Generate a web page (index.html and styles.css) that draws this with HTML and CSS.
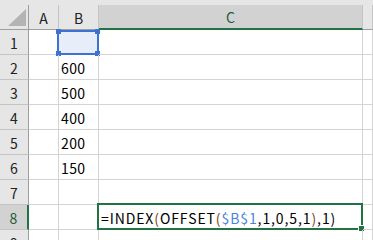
FILE: index.html
```html
<!DOCTYPE html>
<html lang="ja">
<head>
    <meta charset="UTF-8">
    <title>INDEX OFFSET</title>
    <link rel="stylesheet" href="styles.css">
</head>
<body>
    <div class="topbar"></div>
    <div class="grid">
        <!-- заголовки столбцов -->
        <div class="hd corner">
            <svg width="28" height="24" viewBox="0 0 28 24"><polygon points="8,21 26,21 26,4" fill="#b4b4b4"/></svg>
        </div>
        <div class="hd col">A</div>
        <div class="hd col">B</div>
        <div class="hd col active">C</div>
        <div class="hd col"></div>

        <div class="hd row">1</div>
        <div class="cell"></div>
        <div class="cell ref">
            <div class="ref-box">
                <i class="h tl"></i><i class="h tr"></i><i class="h bl"></i><i class="h br"></i>
            </div>
        </div>
        <div class="cell"></div>
        <div class="cell"></div>

        <div class="hd row">2</div>
        <div class="cell"></div>
        <div class="cell num">600</div>
        <div class="cell"></div>
        <div class="cell"></div>

        <div class="hd row">3</div>
        <div class="cell"></div>
        <div class="cell num">500</div>
        <div class="cell"></div>
        <div class="cell"></div>

        <div class="hd row">4</div>
        <div class="cell"></div>
        <div class="cell num">400</div>
        <div class="cell"></div>
        <div class="cell"></div>

        <div class="hd row">5</div>
        <div class="cell"></div>
        <div class="cell num">200</div>
        <div class="cell"></div>
        <div class="cell"></div>

        <div class="hd row">6</div>
        <div class="cell"></div>
        <div class="cell num">150</div>
        <div class="cell"></div>
        <div class="cell"></div>

        <div class="hd row">7</div>
        <div class="cell"></div>
        <div class="cell"></div>
        <div class="cell"></div>
        <div class="cell"></div>

        <div class="hd row active">8</div>
        <div class="cell"></div>
        <div class="cell"></div>
        <div class="cell edit">=INDEX<span class="p2">(</span>OFFSET<span class="p2">(</span><span class="refc">$B$1</span>,1,0,5,1<span class="p2">)</span>,1)<div class="sel-box"><i class="fill"></i></div></div>
        <div class="cell"></div>

        <div class="hd row">9</div>
        <div class="cell"></div>
        <div class="cell"></div>
        <div class="cell"></div>
        <div class="cell"></div>
    </div>
</body>
</html>
```

FILE: styles.css
```css
body {
    margin: 0;
    background: #fff;
    font-family: "Noto Sans CJK JP", "Noto Sans", sans-serif;
    font-size: 14px;
    color: #000;
    overflow: hidden;
    height: 240px;
}

.topbar {
    height: 5px;
    background: #e6e6e6;
}

.grid {
    display: grid;
    grid-template-columns: 29px 30px 40px 264px 1fr;
    grid-auto-rows: 25px;
}

.cell,
.hd {
    box-sizing: border-box;
    border-right: 1px solid #d4d4d4;
    border-bottom: 1px solid #d4d4d4;
    display: flex;
    align-items: center;
    white-space: nowrap;
    position: relative;
}

.cell {
    padding: 2px 0 0 2px;
}

.num {
    letter-spacing: 0.4px;
}

.edit {
    letter-spacing: 0.9px;
}

.hd {
    background: #e6e6e6;
    justify-content: center;
    color: #222;
    padding-top: 1px;
}

.hd.col {
    border-right-color: #c4c4c4;
    border-bottom-color: #9e9e9e;
}

.hd.corner {
    border-right-color: #9e9e9e;
    border-bottom-color: #9e9e9e;
    padding: 0;
}

.hd.row {
    border-right-color: #9e9e9e;
    border-bottom-color: #c4c4c4;
}

.hd.col.active {
    background: #d2d2d2;
    border-bottom: 2px solid #217346;
    color: #1d5e3c;
}

.hd.row.active {
    background: #d2d2d2;
    border-right: 2px solid #217346;
    color: #1d5e3c;
}

/* ссылка $B$1 */
.ref {
    background: #e8eef9;
}

.ref-box {
    position: absolute;
    left: -2px;
    top: 0;
    right: -1px;
    bottom: -1px;
    border: 2px solid #3b72d4;
}

.h {
    position: absolute;
    width: 5px;
    height: 5px;
    background: #3b72d4;
}

.h.tl { left: -3px; top: -3px; }
.h.tr { right: -3px; top: -3px; }
.h.bl { left: -3px; bottom: -3px; }
.h.br { right: -3px; bottom: -3px; }

.refc {
    color: #4a84e0;
}

.p2 {
    color: #8e3f17;
}

/* активная ячейка */
.sel-box {
    position: absolute;
    left: -2px;
    top: -2px;
    right: -1px;
    bottom: -1px;
    border: 2px solid #217346;
}

.fill {
    position: absolute;
    right: -4px;
    bottom: -4px;
    width: 5px;
    height: 5px;
    background: #217346;
    border: 1px solid #fff;
}
```
